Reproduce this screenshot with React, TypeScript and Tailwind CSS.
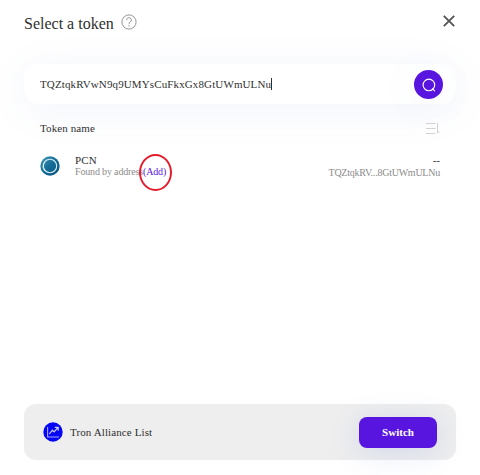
import React, { useState } from 'react'

const token = {
    symbol: 'PCN',
    balance: '--',
    address: 'TQZtqkRVwN9q9UMYsCuFkxGx8GtUWmULNu',
}

const shortAddress = (address: string) => `${address.slice(0, 8)}...${address.slice(-10)}`

const HelpIcon = () => (
    <svg className="w-4 h-4" viewBox="0 0 16 16" fill="none" stroke="#8a8a8a" strokeWidth="0.9">
        <circle cx="8" cy="8" r="7.1" />
        <path d="M5.6 6.2C5.6 4.5 6.6 3.7 8 3.7s2.4.8 2.4 2.3C10.4 7.8 8 8 8 10.2M8 11.2v1.3" />
    </svg>
)

const CloseIcon = () => (
    <svg className="w-3 h-3" viewBox="0 0 12 12" fill="none" stroke="#555" strokeWidth="1.9">
        <path d="M.8.8l10.4 10.4M11.2.8L.8 11.2" />
    </svg>
)

const SearchIcon = () => (
    <svg className="w-[14px] h-[14px]" viewBox="0 0 14 14" fill="none" stroke="#fff" strokeWidth="1.1">
        <circle cx="6.9" cy="6.9" r="5.8" />
        <path d="M10.6 10.9l2 2" strokeLinecap="round" />
    </svg>
)

const SortIcon = () => (
    <svg className="w-[14px] h-3" viewBox="0 0 14 12" fill="none" stroke="#d2d2d2">
        <path d="M0 1.5h9.5M0 6.5h9.5M0 11.5h9.5M11.5 1v10.2l2-2" />
    </svg>
)

const TokenLogo = () => (
    <svg className="w-5 h-5" viewBox="0 0 20 20">
        <defs>
            <linearGradient id="logo" x1="0" y1="0" x2="1" y2="1">
                <stop offset="0" stopColor="#4a9bb8" />
                <stop offset="0.5" stopColor="#136c98" />
                <stop offset="1" stopColor="#07517b" />
            </linearGradient>
        </defs>
        <circle cx="10" cy="10" r="9.7" fill="url(#logo)" />
        <circle cx="10" cy="10" r="6.7" fill="none" stroke="#d9edf3" strokeWidth="1.1" />
        <path d="M4 7a6.8 6.8 0 0 0 1 8" fill="none" stroke="#e6f5f8" strokeWidth="0.8" />
    </svg>
)

const ListIcon = () => (
    <svg className="w-5 h-5" viewBox="0 0 20 20" fill="none">
        <circle cx="10" cy="10" r="9.7" fill="#0505f5" />
        <path d="M4.6 5v10h11.4" stroke="#a5a5ff" strokeWidth="1.1" />
        <path d="M6.4 11.8l3-3.6 1.7 1.7 3.9-4.4M11.8 5.3h3.4v3.4" stroke="#c8c8ff" strokeWidth="1.2" />
    </svg>
)

const App = () => {
    const [query, setQuery] = useState(token.address)

    return (
        <div className="flex flex-col w-[480px] h-[475px] overflow-hidden bg-white px-6 pt-3 pb-[15px] font-['Liberation_Serif',serif] text-[#303030]">
            {/* Header */}
            <div className="flex items-start justify-between h-[52px] shrink-0">
                <div className="flex items-start">
                    <h2 className="text-base leading-6">Select a token</h2>
                    <button className="ml-[7px] mt-[2px]">
                        <HelpIcon />
                    </button>
                </div>
                <button className="mt-[3px] mr-[1px]">
                    <CloseIcon />
                </button>
            </div>

            {/* Search */}
            <div className="flex items-center justify-between h-10 shrink-0 rounded-[15px] bg-white pl-4 pr-[13px] shadow-[0_6px_40px_rgba(90,110,200,0.08)]">
                <div className="flex items-center">
                    <input
                        className="w-[231px] h-5 text-[11px] tracking-[0.12px] outline-none"
                        value={query}
                        onChange={(e) => setQuery(e.target.value)}
                    />
                    <span className="w-px h-3 bg-[#303030]"></span>
                </div>
                <button className="flex items-center justify-center w-[29px] h-[29px] mt-[1px] rounded-full bg-[#5915e0] shadow-[0_4px_40px_rgba(90,110,220,0.08)]">
                    <SearchIcon />
                </button>
            </div>

            {/* Token list */}
            <div className="flex items-center justify-between px-4 mt-4 h-4 shrink-0 text-[11px]">
                <span className="tracking-[0.1px]">Token name</span>
                <SortIcon />
            </div>
            <div className="flex justify-between px-4 mt-[18px]">
                <div className="flex">
                    <div className="mt-[2px]">
                        <TokenLogo />
                    </div>
                    <div className="ml-[15px]">
                        <p className="text-[11px] leading-3 tracking-[0.15px]">{token.symbol}</p>
                        <p className="flex text-[10px] leading-3 tracking-[-0.16px] text-[#8c8c8c]">
                            Found by address
                            <button className="relative text-[#5915e0]">
                                (Add)
                                <span className="absolute left-[-4px] top-[-12px] w-[33px] h-[37px] rounded-[50%] border-2 border-[#e51c2b]"></span>
                            </button>
                        </p>
                    </div>
                </div>
                <div className="text-right">
                    <p className="text-[11px] leading-3">{token.balance}</p>
                    <p className="text-[10px] leading-[13px] tracking-[-0.24px] text-[#8c8c8c]">{shortAddress(token.address)}</p>
                </div>
            </div>

            {/* Footer */}
            <div className="flex items-center justify-between mt-auto h-14 shrink-0 rounded-xl bg-[#eee] pl-[19px] pr-[19px]">
                <div className="flex items-center gap-[7px] text-[11px] tracking-[0.11px]">
                    <ListIcon />
                    <span>Tron Alliance List</span>
                </div>
                <button className="w-[78px] h-[31px] rounded-lg bg-[#5915e0] text-[11px] font-bold text-white shadow-[0_4px_30px_rgba(80,105,220,0.17)]">
                    Switch
                </button>
            </div>
        </div>
    )
}

export default App
